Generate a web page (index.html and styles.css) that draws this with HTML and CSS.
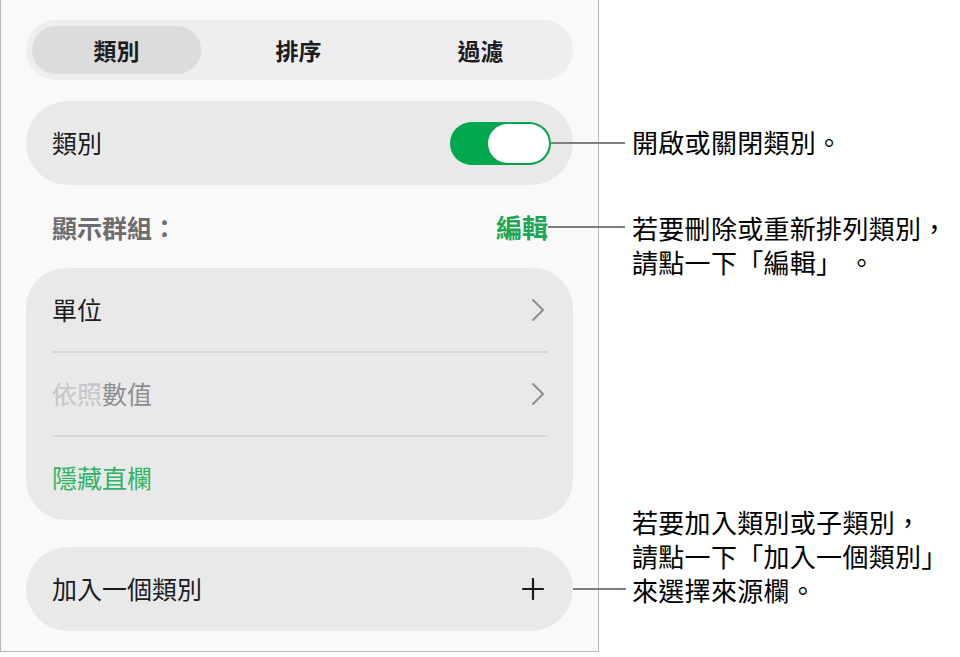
FILE: index.html
```html
<!DOCTYPE html>
<html lang="zh-Hant">
<head>
    <meta charset="UTF-8">
    <meta name="viewport" content="width=device-width, initial-scale=1.0">
    <title>類別</title>
    <link rel="stylesheet" href="styles.css">
</head>
<body>
    <div class="panel">
        <!-- Tabs -->
        <div class="segmented">
            <div class="segment active">類別</div>
            <div class="segment">排序</div>
            <div class="segment">過濾</div>
        </div>

        <div class="card row">
            <span class="label">類別</span>
            <div class="toggle on">
                <div class="knob"></div>
                <div class="callout">
                    <div class="leader" style="width: 74px"></div>
                    <div class="note center">開啟或關閉類別。</div>
                </div>
            </div>
        </div>

        <div class="group-header">
            <span class="header-title">顯示群組：</span>
            <span class="edit-link">編輯
                <span class="callout">
                    <span class="leader" style="width: 77px"></span>
                    <span class="note first">若要刪除或重新排列類別，<br>請點一下「編輯」 。</span>
                </span>
            </span>
        </div>

        <div class="card group">
            <div class="row item">
                <span class="label">單位</span>
                <svg class="chevron" width="14" height="24" viewBox="0 0 14 24">
                    <path d="M2 2 L12 12 L2 22" fill="none" stroke="currentColor" stroke-width="2" stroke-linecap="round" stroke-linejoin="round"/>
                </svg>
            </div>
            <div class="row item">
                <span class="label"><span class="dim">依照</span><span class="muted">數值</span></span>
                <svg class="chevron" width="14" height="24" viewBox="0 0 14 24">
                    <path d="M2 2 L12 12 L2 22" fill="none" stroke="currentColor" stroke-width="2" stroke-linecap="round" stroke-linejoin="round"/>
                </svg>
            </div>
            <div class="row item">
                <span class="label green">隱藏直欄</span>
            </div>
        </div>

        <div class="card row add">
            <span class="label">加入一個類別</span>
            <svg class="plus" width="22" height="22" viewBox="0 0 22 22">
                <path d="M11 1 V21 M1 11 H21" stroke="currentColor" stroke-width="2.2" stroke-linecap="round"/>
            </svg>
            <div class="callout">
                <div class="leader" style="width: 53px"></div>
                <div class="note last">若要加入類別或子類別，<br>請點一下「加入一個類別」<br>來選擇來源欄。</div>
            </div>
        </div>
    </div>
</body>
</html>
```

FILE: styles.css
```css
body {
    margin: 0;
    background-color: #fff;
    font-family: "Noto Sans CJK TC", "Noto Sans", sans-serif;
    color: #1c1c1e;
}
.panel {
    width: 547px;
    padding: 20px 25px 20px 25px;
    background-color: #f9f9f9;
    border-left: 1px solid #b8b8b8;
    border-right: 1px solid #b8b8b8;
    border-bottom: 1px solid #b8b8b8;
}

/* segmented control */
.segmented {
    display: grid;
    grid-template-columns: repeat(3, 169px);
    column-gap: 13px;
    padding: 6px;
    height: 48px;
    border-radius: 30px;
    background-color: #eeeef0;
}
.segment {
    display: flex;
    align-items: center;
    justify-content: center;
    border-radius: 24px;
    font-size: 23px;
    font-weight: 600;
    color: #1c1c1e;
}
.segment.active {
    background-color: #dcdcdf;
}

/* cards */
.card {
    background-color: #e9e9ea;
    border-radius: 42px;
    position: relative;
}
.row {
    display: flex;
    align-items: center;
    justify-content: space-between;
    height: 84px;
    box-sizing: border-box;
    padding: 0 22px 0 26px;
}
.card.row {
    margin-top: 21px;
}
.label {
    font-size: 25px;
    line-height: 30px;
    margin-top: -2px;
}
.green {
    color: #2eb462;
}
.dim {
    color: #c6c6c9;
}
.muted {
    color: #8e8e92;
}

/* switch */
.toggle {
    position: relative;
    width: 101px;
    height: 43px;
    border-radius: 22px;
    background-color: #00a84f;
}
.knob {
    position: absolute;
    right: 2px;
    top: 2px;
    width: 61px;
    height: 39px;
    border-radius: 20px;
    background-color: #fff;
    box-shadow: 0 0 1px rgba(0, 0, 0, 0.3);
}

.group-header {
    height: 83px;
    display: flex;
    align-items: center;
    justify-content: space-between;
    padding: 0 25px 0 26px;
}
.header-title {
    font-size: 25px;
    font-weight: 600;
    color: #6d6d6f;
}
.edit-link {
    position: relative;
    font-size: 26px;
    font-weight: 700;
    color: #1ea654;
}

.group {
    border-radius: 40px;
}
.group .item {
    padding: 0 28px 0 26px;
}
.group .item + .item {
    position: relative;
}
.group .item + .item::before {
    content: "";
    position: absolute;
    top: -1px;
    left: 26px;
    right: 25px;
    height: 2px;
    background-color: #d7d7d9;
}
.chevron {
    color: #8f8f92;
}

.card.row.add {
    margin-top: 27px;
    padding-right: 29px;
}
.plus {
    color: #1c1c1e;
}

/* annotation leaders */
.callout {
    position: absolute;
    left: 100%;
    top: 50%;
    height: 0;
    display: block;
}
.leader {
    position: absolute;
    top: -1px;
    left: 0;
    height: 2px;
    background-color: #7f7f7f;
    display: block;
}
.note {
    position: absolute;
    left: 81px;
    font-size: 26px;
    font-weight: 400;
    line-height: 34px;
    letter-spacing: 0.3px;
    color: #000;
    white-space: nowrap;
    display: block;
}
.toggle .note {
    left: 81px;
}
.edit-link .note {
    left: 84px;
}
.add .note {
    left: 59px;
}
.note.center {
    top: -18px;
}
.note.first {
    top: -16px;
}
.note.last {
    bottom: -18px;
}
```
